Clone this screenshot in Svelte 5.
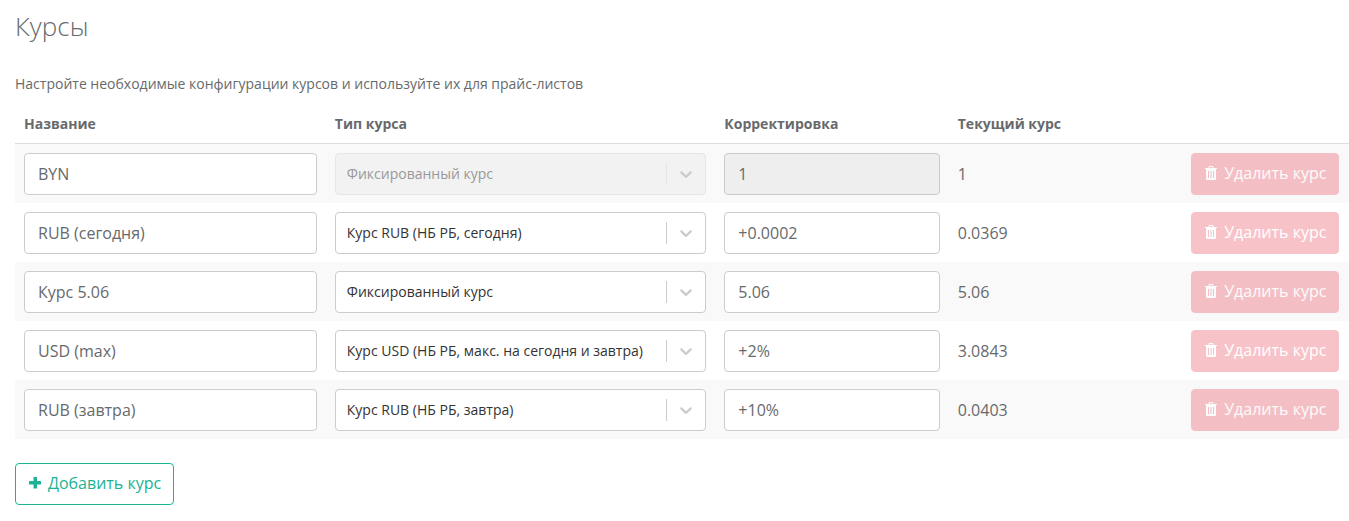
<script lang="ts">
	interface Rate {
		name: string;
		type: string;
		correction: string;
		current: string;
		locked?: boolean;
	}

	const types = [
		'Фиксированный курс',
		'Курс RUB (НБ РБ, сегодня)',
		'Курс RUB (НБ РБ, завтра)',
		'Курс USD (НБ РБ, макс. на сегодня и завтра)'
	];

	let rates: Rate[] = $state([
		{ name: 'BYN', type: types[0], correction: '1', current: '1', locked: true },
		{ name: 'RUB (сегодня)', type: types[1], correction: '+0.0002', current: '0.0369' },
		{ name: 'Курс 5.06', type: types[0], correction: '5.06', current: '5.06' },
		{ name: 'USD (max)', type: types[3], correction: '+2%', current: '3.0843' },
		{ name: 'RUB (завтра)', type: types[2], correction: '+10%', current: '0.0403' }
	]);

	function addRate() {
		rates.push({ name: '', type: types[0], correction: '', current: '' });
	}
</script>

<main>
	<h2>Курсы</h2>
	<p>Настройте необходимые конфигурации курсов и используйте их для прайс-листов</p>

	<table>
		<thead>
			<tr>
				<th class="col-name" id="name">Название</th>
				<th class="col-type" id="type">Тип курса</th>
				<th class="col-rate" id="correction">Корректировка</th>
				<th class="col-rate">Текущий курс</th>
				<td></td>
			</tr>
		</thead>
		<tbody>
			{#each rates as rate}
				<tr>
					<td><input type="text" aria-labelledby="name" bind:value={rate.name} /></td>
					<td>
						<div class="select" class:disabled={rate.locked}>
							<select aria-labelledby="type" bind:value={rate.type} disabled={rate.locked}>
								{#each types as type}
									<option value={type}>{type}</option>
								{/each}
							</select>
							<span class="indicator">
								<svg width="20" height="20" viewBox="0 0 20 20" aria-hidden="true">
									<path
										d="M4.516 7.548c0.436-0.446 1.043-0.481 1.576 0l3.908 3.747 3.908-3.747c0.533-0.481 1.141-0.446 1.574 0 0.436 0.445 0.408 1.197 0 1.615-0.406 0.418-4.695 4.502-4.695 4.502-0.217 0.223-0.502 0.335-0.787 0.335s-0.57-0.112-0.789-0.335c0 0-4.287-4.084-4.695-4.502s-0.436-1.17 0-1.615z"
									/>
								</svg>
							</span>
						</div>
					</td>
					<td>
						<input
							type="text"
							aria-labelledby="correction"
							bind:value={rate.correction}
							disabled={rate.locked}
						/>
					</td>
					<td>{rate.current}</td>
					<td>
						<button class="btn danger" disabled>
							<svg width="12" height="14" viewBox="0 0 12 14" aria-hidden="true">
								<path
									fill-rule="evenodd"
									d="M3.500 1.200C3.500.5 4 0 4.700 0h2.600C8 0 8.500.5 8.500 1.200V2H12v1h-1v9.500c0 .8-.5 1.500-1.200 1.500H2.200C1.500 14 1 13.300 1 12.500V3H0V2h3.500zM4.500 1.200V2h3v-.8L7.300 1H4.700zM3 5v7h1V5zM5.500 5v7h1V5zM8 5v7h1V5z"
								/>
							</svg>
							Удалить курс
						</button>
					</td>
				</tr>
			{/each}
		</tbody>
	</table>

	<button class="btn primary" onclick={addRate}>
		<svg width="12" height="14" viewBox="0 0 12 14" aria-hidden="true">
			<path
				d="M5 1h2.500q.5 0 .5.5V5h3.500q.5 0 .5.5v2.500q0 .5-.5.5H8V12q0 .5-.5.5H5q-.5 0-.5-.5V8.500H.5Q0 8.500 0 8V5.500Q0 5 .5 5h4V1.500Q4.500 1 5 1z"
			/>
		</svg>
		Добавить курс
	</button>
</main>

<style>
	:global(body) {
		margin: 0;
		background: #fff;
	}

	main {
		padding: 9px 0 16px 15px;
		font-family: 'Open Sans', 'Noto Sans', sans-serif;
		font-size: 14px;
		line-height: 21px;
		color: #676a6c;
	}

	h2 {
		margin: 0 0 30px;
		font-size: 26px;
		font-weight: 300;
		line-height: 34px;
	}

	p {
		margin: 0 0 10px;
	}

	table {
		width: 100%;
		margin-bottom: 24px;
		table-layout: fixed;
		border-collapse: collapse;
	}

	th,
	td {
		box-sizing: border-box;
	}

	.col-name {
		width: 23.3%;
	}

	.col-type {
		width: 29.2%;
	}

	.col-rate {
		width: 17.5%;
	}

	th {
		padding: 9px;
		font-weight: 700;
		text-align: left;
	}

	thead tr {
		border-bottom: 1px solid #ddd;
	}

	tbody tr:nth-child(odd) {
		background: #f9f9f9;
	}

	tbody td {
		padding: 9px 9px 8px;
		font-size: 16px;
		vertical-align: middle;
	}

	input,
	select {
		display: block;
		box-sizing: border-box;
		width: 100%;
		height: 42px;
		margin: 0;
		border: 1px solid #ccc;
		border-radius: 4px;
		background: #fff;
		font-family: inherit;
	}

	input {
		padding: 0 13px;
		font-size: 16px;
		color: #676a6c;
	}

	input:disabled {
		background: #eee;
	}

	select {
		appearance: none;
		padding: 0 42px 2px 11px;
		font-size: 14px;
		color: #333;
	}

	select:disabled {
		border-color: #e6e6e6;
		background: #f2f2f2;
		color: #999;
		opacity: 1;
	}

	.select {
		position: relative;
	}

	/* separator and chevron over the native control */
	.indicator {
		position: absolute;
		top: 10px;
		right: 1px;
		bottom: 10px;
		display: flex;
		align-items: center;
		padding: 0 9px;
		border-left: 1px solid #ccc;
		pointer-events: none;
	}

	.disabled .indicator {
		border-color: #e6e6e6;
	}

	.indicator svg {
		fill: #ccc;
	}

	.btn {
		display: flex;
		align-items: center;
		gap: 7px;
		box-sizing: border-box;
		height: 42px;
		padding: 0 12px 2px 13px;
		border: 1px solid;
		border-radius: 4px;
		font-family: inherit;
		font-size: 16px;
		white-space: nowrap;
	}

	.btn svg {
		fill: currentColor;
	}

	.danger {
		border-color: #ed5565;
		background: #ed5565;
		color: #fff;
		opacity: 0.35;
	}

	.primary {
		border-color: #1ab394;
		background: #fff;
		color: #1ab394;
		cursor: pointer;
	}
</style>
